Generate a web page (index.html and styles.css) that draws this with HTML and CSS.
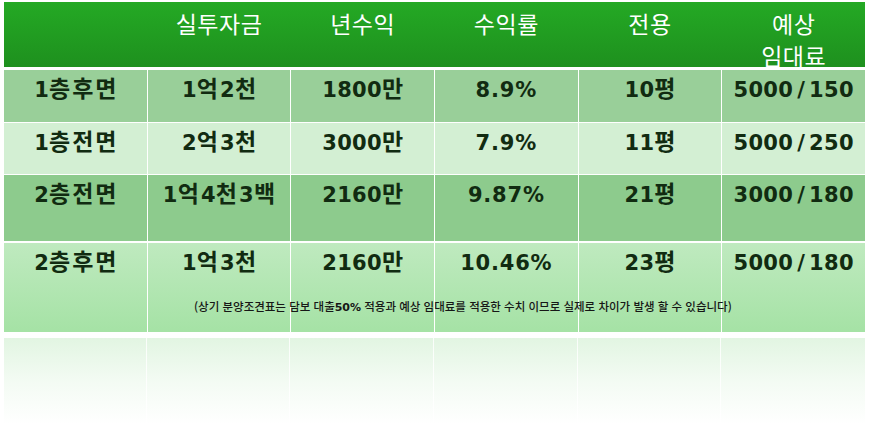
FILE: index.html
```html
<!DOCTYPE html>
<html lang="ko">
<head>
<meta charset="utf-8">
<link rel="stylesheet" href="styles.css">
</head>
<body>
<div class="wrap">
  <div class="head">
    <div class="hc"></div>
    <div class="hc">실투자금</div>
    <div class="hc">년수익</div>
    <div class="hc">수익률</div>
    <div class="hc">전용</div>
    <div class="hc">예상<br>임대료</div>
  </div>
  <div class="table">
    <div class="row r1">
      <div class="c">1<span class="k">층후면</span></div><div class="c">1<span class="k">억</span>2<span class="k">천</span></div><div class="c">1800<span class="k">만</span></div><div class="c pct">8.9%</div><div class="c">10<span class="k">평</span></div><div class="c">5000<span class="sl">/</span>150</div>
    </div>
    <div class="row r2">
      <div class="c">1<span class="k">층전면</span></div><div class="c">2<span class="k">억</span>3<span class="k">천</span></div><div class="c">3000<span class="k">만</span></div><div class="c pct">7.9%</div><div class="c">11<span class="k">평</span></div><div class="c">5000<span class="sl">/</span>250</div>
    </div>
    <div class="row r3">
      <div class="c">2<span class="k">층전면</span></div><div class="c">1<span class="k">억</span>4<span class="k">천</span>3<span class="k">백</span></div><div class="c">2160<span class="k">만</span></div><div class="c pct">9.87%</div><div class="c">21<span class="k">평</span></div><div class="c">3000<span class="sl">/</span>180</div>
    </div>
    <div class="row r4">
      <div class="c">2<span class="k">층후면</span></div><div class="c">1<span class="k">억</span>3<span class="k">천</span></div><div class="c">2160<span class="k">만</span></div><div class="c pct">10.46%</div><div class="c">23<span class="k">평</span></div><div class="c">5000<span class="sl">/</span>180</div>
      <div class="note">(상기 분양조견표는 담보 대출<b>50%</b> 적용과 예상 임대료를 적용한 수치 이므로 실제로 차이가 발생 할 수 있습니다)</div>
    </div>
  </div>
  <div class="refl">
    <div class="rc"></div><div class="rc"></div><div class="rc"></div><div class="rc"></div><div class="rc"></div><div class="rc"></div>
  </div>
</div>
</body>
</html>
```
FILE: styles.css
```css
html, body {
  margin: 0;
  padding: 0;
  background: #ffffff;
}
body {
  padding: 2px 4px 0 4px;
}
.wrap {
  width: 861px;
}
.head {
  display: grid;
  grid-template-columns: repeat(6, 1fr);
  column-gap: 1px;
  height: 65px;
  background: linear-gradient(#24a924, #1e901e);
  box-sizing: border-box;
  padding-top: 5px;
}
.hc {
  text-align: center;
  color: #ffffff;
  font-family: "Noto Sans CJK KR", "Noto Sans", sans-serif;
  font-size: 23px;
  line-height: 32px;
  letter-spacing: 0.5px;
}
.table {
  margin-top: 3px;
  display: flex;
  flex-direction: column;
  gap: 1px;
}
.row {
  display: grid;
  grid-template-columns: repeat(6, 1fr);
  column-gap: 1px;
  position: relative;
}
.c {
  text-align: center;
  font-family: "DejaVu Sans", "Noto Sans CJK KR", sans-serif;
  font-weight: bold;
  font-size: 21px;
  line-height: 24px;
  color: #112b11;
  padding-top: 8px;
  box-sizing: border-box;
  letter-spacing: 0.3px;
}
.pct {
  letter-spacing: 0.8px;
}
.k {
  font-family: "Noto Sans CJK KR", sans-serif;
  font-size: 23px;
  line-height: 0;
  letter-spacing: 2px;
}
.k:last-child {
  margin-right: -2px;
}
.sl {
  padding: 0 4px;
}
.r1 .c { background: #99cf99; height: 52px; }
.r2 .c { background: #d3efd3; height: 51px; }
.r3 .c { background: #8dcb8d; height: 66px; }
.r3 { margin-bottom: 1px; }
.r4 .c { background: linear-gradient(#bfeabf, #a5e2a5); height: 89px; }
.note {
  position: absolute;
  left: 190px;
  top: 56px;
  width: 533px;
  text-align: center;
  font-family: "Noto Sans CJK KR", sans-serif;
  font-size: 11.5px;
  font-weight: 500;
  line-height: 14px;
  color: #161616;
  white-space: nowrap;
  letter-spacing: 0;
}
.note b {
  font-family: "DejaVu Sans", sans-serif;
  font-weight: bold;
  font-size: 11px;
}
.refl {
  margin-top: 6px;
  height: 86px;
  display: grid;
  grid-template-columns: repeat(6, 1fr);
  column-gap: 1px;
  background: linear-gradient(#e2f5e2 0%, #f3fbf3 50%, #ffffff 100%);
}
.rc {
  border-right: 1px solid rgba(255, 255, 255, 0.8);
}
.rc:last-child {
  border-right: none;
}
```
